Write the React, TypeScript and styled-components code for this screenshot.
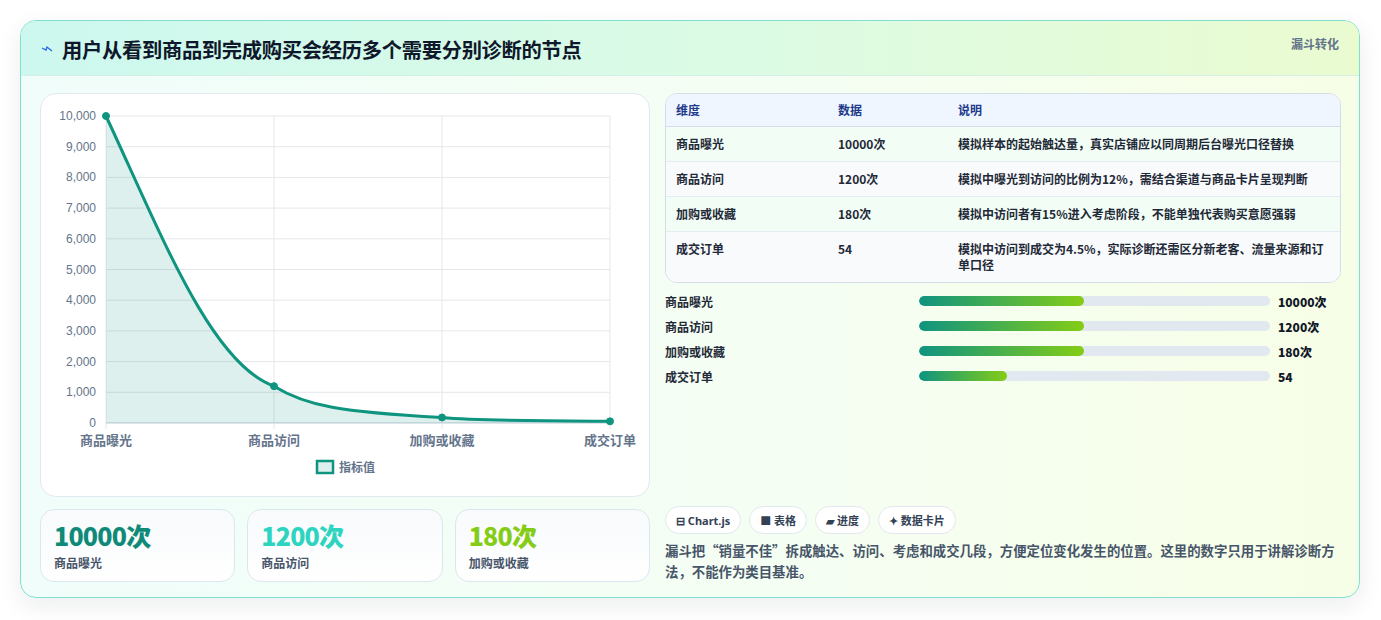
import React from "react";
import styled, { createGlobalStyle } from "styled-components";

const Global = createGlobalStyle`
  html, body { margin: 0; padding: 0; background: #fff; }
  body { font-family: "Noto Sans", "Noto Sans CJK SC", sans-serif; }
  * { box-sizing: border-box; }
`;

const Page = styled.div`
  padding: 20px 21px 22px 20px;
  width: 1381px;
  height: 620px;
`;

const Card = styled.div`
  width: 1340px;
  height: 578px;
  border: 1px solid #7fe0cf;
  border-radius: 16px;
  overflow: hidden;
  background: linear-gradient(90deg, #f0fdfa 0%, #f5fef2 60%, #f7fee7 100%);
  box-shadow: 0 8px 24px rgba(15, 23, 42, 0.08);
  display: flex;
  flex-direction: column;
`;

const Header = styled.div`
  height: 55px;
  flex: none;
  display: flex;
  justify-content: space-between;
  align-items: flex-start;
  padding: 0 20px 0 20px;
  background: linear-gradient(90deg, #cdf8ef 0%, #dcfbe4 55%, #eafbd0 100%);
  border-bottom: 1px solid #d4efe6;
`;

const Title = styled.h1`
  margin: 13px 0 0 0;
  display: flex;
  align-items: center;
  gap: 9px;
  font-size: 20.3px;
  font-weight: 700;
  color: #0f172a;
  font-family: "Noto Sans CJK SC", sans-serif;
  letter-spacing: -0.3px;
`;

const Tag = styled.span`
  margin-top: 14px;
  font-size: 12px;
  font-weight: 700;
  color: #64748b;
  font-family: "Noto Sans CJK SC", sans-serif;
`;

const Body = styled.div`
  flex: 1;
  display: grid;
  grid-template-columns: 610px 676px;
  gap: 15px;
  padding: 17px 19px 18px 19px;
`;

const Col = styled.div`
  display: flex;
  flex-direction: column;
  gap: 12px;
`;

const ChartCard = styled.div`
  height: 404px;
  background: #fff;
  border: 1px solid #e2e8f0;
  border-radius: 16px;
  overflow: hidden;
`;

const Stats = styled.div`
  display: grid;
  grid-template-columns: repeat(3, 1fr);
  gap: 12px;
`;

const Stat = styled.div`
  height: 73px;
  border: 1px solid #dbe7ef;
  border-radius: 14px;
  background: linear-gradient(180deg, #f8fafc, #ffffff);
  padding: 9px 13px;
`;

const StatValue = styled.div<{ $c: string }>`
  font-size: 25px;
  font-weight: 800;
  line-height: 32px;
  color: ${(p) => p.$c};
  font-family: "Noto Sans CJK SC", sans-serif;
  letter-spacing: -0.8px;
`;

const StatLabel = styled.div`
  font-size: 12px;
  font-weight: 600;
  color: #475569;
  margin-top: 3px;
  font-family: "Noto Sans CJK SC", sans-serif;
`;

const TableWrap = styled.div`
  border: 1px solid #d5dee8;
  border-radius: 12px;
  overflow: hidden;
  background: #f8fafc;
`;

const Table = styled.table`
  width: 100%;
  border-collapse: collapse;
  font-family: "Noto Sans CJK SC", sans-serif;
  font-size: 12px;
  font-weight: 600;
  th, td { text-align: left; padding: 0 10px; vertical-align: top; }
  th { background: #eff6ff; color: #1e3a8a; height: 32px; vertical-align: middle; border-bottom: 1px solid #d5dee8; }
  td { color: #1f2937; padding-top: 9px; padding-bottom: 9px; border-top: 1px solid #e5ebf1; line-height: 16px; }
  tr:nth-child(odd) td { background: #f2fdf6; }
  tr:nth-child(even) td { background: #f8fafc; }
  tbody tr:first-child td { border-top: none; }
`;

const Bars = styled.div`
  display: flex;
  flex-direction: column;
  gap: 8px;
  margin-top: 10px;
`;

const BarRow = styled.div`
  display: grid;
  grid-template-columns: 246px 351px 1fr;
  align-items: center;
  gap: 8px;
  height: 17px;
  font-family: "Noto Sans CJK SC", sans-serif;
  font-size: 12px;
  font-weight: 600;
  color: #1f2937;
`;

const Track = styled.div`
  height: 10px;
  border-radius: 5px;
  background: #e2e8f0;
  overflow: hidden;
`;

const Fill = styled.div`
  height: 100%;
  border-radius: 5px;
  background: linear-gradient(90deg, #0f9480, #84cc16);
`;

const BarVal = styled.span`
  font-weight: 800;
  color: #111827;
`;

const Spacer = styled.div`
  flex: 1;
`;

const Chips = styled.div`
  display: flex;
  gap: 8px;
`;

const Chip = styled.span`
  height: 28px;
  padding: 0 10px;
  display: inline-flex;
  align-items: center;
  gap: 4px;
  border: 1px solid #e2e8f0;
  border-radius: 14px;
  background: #fff;
  font-size: 11px;
  font-weight: 700;
  color: #334155;
  font-family: "Noto Sans", "Noto Sans CJK SC", sans-serif;
`;

const Note = styled.p`
  margin: 6px 0 0 0;
  font-size: 13.4px;
  line-height: 21px;
  font-weight: 600;
  color: #475569;
  font-family: "Noto Sans CJK SC", sans-serif;
`;

const rows = [
  ["商品曝光", "10000次", "模拟样本的起始触达量，真实店铺应以同周期后台曝光口径替换"],
  ["商品访问", "1200次", "模拟中曝光到访问的比例为12%，需结合渠道与商品卡片呈现判断"],
  ["加购或收藏", "180次", "模拟中访问者有15%进入考虑阶段，不能单独代表购买意愿强弱"],
  ["成交订单", "54", "模拟中访问到成交为4.5%，实际诊断还需区分新老客、流量来源和订单口径"],
];

const bars: [string, string, number][] = [
  ["商品曝光", "10000次", 47],
  ["商品访问", "1200次", 47],
  ["加购或收藏", "180次", 47],
  ["成交订单", "54", 25],
];

function Chart() {
  const x0 = 65, x1 = 569, yTop = 22, yBot = 329;
  const xs = [65, 233, 401, 569];
  const ticks = Array.from({ length: 11 }, (_, i) => i * 1000);
  const yOf = (v: number) => yBot - ((yBot - yTop) * v) / 10000;
  const pts = [10000, 1200, 180, 54].map((v, i) => [xs[i], yOf(v)]);
  const d = `M${pts[0][0]},${pts[0][1]} C120,140 170,270 ${pts[1][0]},${pts[1][1]} C265,312 300,318 ${pts[2][0]},${pts[2][1]} C440,327 500,327 ${pts[3][0]},${pts[3][1]}`;
  const font = { fontFamily: "'Liberation Sans', 'Noto Sans CJK SC', sans-serif" };
  return (
    <svg width="610" height="404" viewBox="0 0 610 404">
      {ticks.map((t) => (
        <g key={t}>
          <line x1={x0} x2={x1} y1={yOf(t)} y2={yOf(t)} stroke="#e5e7eb" />
          <text x={55} y={yOf(t) + 4} textAnchor="end" fontSize="12" fill="#64748b" style={font}>
            {t.toLocaleString("en-US")}
          </text>
        </g>
      ))}
      {xs.map((x) => (
        <line key={x} x1={x} x2={x} y1={yTop} y2={yBot + 6} stroke="#e5e7eb" />
      ))}
      <line x1={x0} x2={x1} y1={yBot} y2={yBot} stroke="#cbd5e1" />
      <path d={`${d} L${x1},${yBot} L${x0},${yBot} Z`} fill="rgba(15,148,128,0.14)" />
      <path d={d} fill="none" stroke="#0f9480" strokeWidth="3" />
      {pts.map(([x, y], i) => (
        <circle key={i} cx={x} cy={y} r="3.5" fill="#0f9480" stroke="#0f9480" strokeWidth="1" />
      ))}
      {["商品曝光", "商品访问", "加购或收藏", "成交订单"].map((l, i) => (
        <text key={l} x={xs[i]} y={351} textAnchor="middle" fontSize="13" fontWeight="600" fill="#64748b" style={font}>
          {l}
        </text>
      ))}
      <rect x={276} y={367} width={16} height={12} fill="rgba(15,148,128,0.14)" stroke="#0f9480" strokeWidth="2.5" />
      <text x={298} y={378} fontSize="12" fontWeight="600" fill="#64748b" style={font}>指标值</text>
    </svg>
  );
}

export default function App() {
  return (
    <Page>
      <Global />
      <Card>
        <Header>
          <Title>
            <svg width="12" height="12" viewBox="0 0 12 12">
              <path d="M1 5 L5 7 L6 4 L11 8" fill="none" stroke="#2563eb" strokeWidth="1.3" />
            </svg>
            用户从看到商品到完成购买会经历多个需要分别诊断的节点
          </Title>
          <Tag>漏斗转化</Tag>
        </Header>
        <Body>
          <Col>
            <ChartCard>
              <Chart />
            </ChartCard>
            <Stats>
              <Stat><StatValue $c="#0f8a78">10000次</StatValue><StatLabel>商品曝光</StatLabel></Stat>
              <Stat><StatValue $c="#2dd4bf">1200次</StatValue><StatLabel>商品访问</StatLabel></Stat>
              <Stat><StatValue $c="#84cc16">180次</StatValue><StatLabel>加购或收藏</StatLabel></Stat>
            </Stats>
          </Col>
          <Col style={{ gap: 0 }}>
            <TableWrap>
              <Table>
                <colgroup>
                  <col style={{ width: 162 }} />
                  <col style={{ width: 120 }} />
                  <col />
                </colgroup>
                <thead>
                  <tr><th>维度</th><th>数据</th><th>说明</th></tr>
                </thead>
                <tbody>
                  {rows.map((r) => (
                    <tr key={r[0]}><td>{r[0]}</td><td>{r[1]}</td><td>{r[2]}</td></tr>
                  ))}
                </tbody>
              </Table>
            </TableWrap>
            <Bars>
              {bars.map(([l, v, w]) => (
                <BarRow key={l}>
                  <span>{l}</span>
                  <Track><Fill style={{ width: `${w}%` }} /></Track>
                  <BarVal>{v}</BarVal>
                </BarRow>
              ))}
            </Bars>
            <Spacer />
            <Chips>
              <Chip>⊟ Chart.js</Chip>
              <Chip>■ 表格</Chip>
              <Chip>▰ 进度</Chip>
              <Chip>✦ 数据卡片</Chip>
            </Chips>
            <Note>漏斗把“销量不佳”拆成触达、访问、考虑和成交几段，方便定位变化发生的位置。这里的数字只用于讲解诊断方法，不能作为类目基准。</Note>
          </Col>
        </Body>
      </Card>
    </Page>
  );
}
